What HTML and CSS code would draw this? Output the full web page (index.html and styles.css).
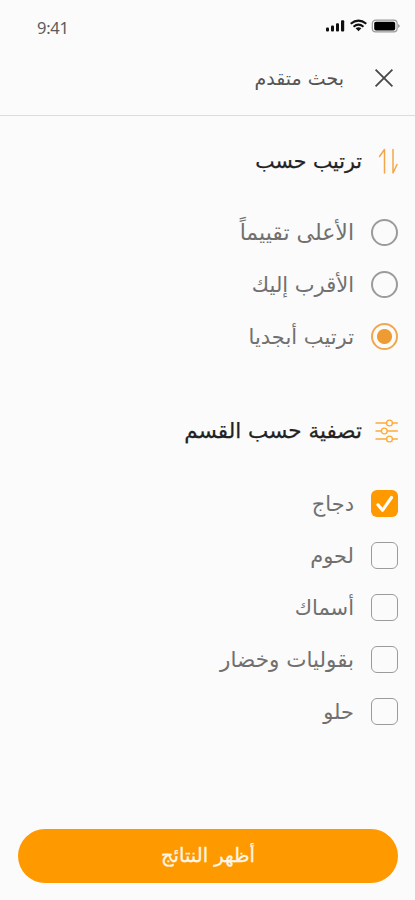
FILE: index.html
```html
<!DOCTYPE html>
<html lang="ar" dir="rtl">
<head>
<meta charset="utf-8">
<title>بحث متقدم</title>
<link rel="stylesheet" href="styles.css">
</head>
<body>
<main class="screen">
  <div class="status" dir="ltr">
    <span class="time">9:41</span>
    <svg class="indicators" width="76" height="16" viewBox="0 0 76 16">
      <g fill="#111"><rect x="1" y="9.5" width="3" height="4" rx="1"/><rect x="6" y="7.5" width="3" height="6" rx="1"/><rect x="11" y="5.3" width="3" height="8.2" rx="1"/><rect x="16" y="2.3" width="3.2" height="11.2" rx="1"/></g>
      <g fill="none" stroke="#111" stroke-width="2.1"><path d="M25.7 5.7Q33.5-.6 41.3 5.7"/><path d="M28.5 8.7Q33.5 4.7 38.5 8.7"/></g>
      <path d="M30.6 10.3Q33.5 8.4 36.4 10.3L33.5 13.2Z" fill="#111"/>
      <rect x="47.3" y="2.1" width="24.8" height="11.8" rx="3.4" fill="none" stroke="#999" stroke-width="1.2"/>
      <rect x="49.2" y="3.7" width="21" height="8.8" rx="1.8" fill="#000"/>
      <path d="M73.2 6Q76.2 8 73.2 10Z" fill="#888"/>
    </svg>
  </div>
  <header class="topbar">
    <svg width="20" height="20" viewBox="0 0 20 20" fill="none" stroke="#484848" stroke-width="1.8"><path d="M1.6 1.6 18.4 18.4M18.4 1.6 1.6 18.4"/></svg>
    <h1>بحث متقدم</h1>
  </header>
  <section class="group sort">
    <h2>
      <svg width="24" height="28" viewBox="0 0 24 28" fill="none" stroke="#f5a649" stroke-width="1.5" stroke-linejoin="round" stroke-linecap="round"><path d="M10.5 26V2.5L5.5 9.5M19 2.5V26L23 17.5"/></svg>
      <span>ترتيب حسب</span>
    </h2>
    <ul>
      <li><i class="radio"></i><span class="wide">الأعلى تقييماً</span></li>
      <li><i class="radio"></i><span>الأقرب إليك</span></li>
      <li><i class="radio on"></i><span>ترتيب أبجديا</span></li>
    </ul>
  </section>
  <section class="group filter">
    <h2>
      <svg width="24" height="28" viewBox="0 0 24 28" stroke="#ffaa37" stroke-width="1.4" fill="#fbfbfb" stroke-linecap="round"><path d="M2 6H23.3M2 14H23.3M2 22H23.3"/><circle cx="15.5" cy="6" r="2.9"/><circle cx="10.3" cy="14" r="2.9"/><circle cx="15.5" cy="22" r="2.9"/></svg>
      <span>تصفية حسب القسم</span>
    </h2>
    <ul>
      <li><i class="check on"><svg width="27" height="27" viewBox="0 0 27 27" fill="none" stroke="#fff" stroke-width="3.1" stroke-linecap="round" stroke-linejoin="round"><path d="M7 14.8 11.5 20.3 20.5 7.5"/></svg></i><span>دجاج</span></li>
      <li><i class="check"></i><span>لحوم</span></li>
      <li><i class="check"></i><span>أسماك</span></li>
      <li><i class="check"></i><span class="long">بقوليات وخضار</span></li>
      <li><i class="check"></i><span>حلو</span></li>
    </ul>
  </section>
  <button class="submit" type="button">أظهر النتائج</button>
</main>
</body>
</html>
```
FILE: styles.css
```css
* { box-sizing: border-box; margin: 0; padding: 0; }
body { background: #fbfbfb; font-family: "DejaVu Sans", sans-serif; }
svg { display: block; flex: none; }
.screen { width: 415px; height: 900px; display: flex; flex-direction: column; overflow: hidden; }
.status { height: 54px; display: flex; justify-content: space-between; padding: 18px 14px 0 37px; }
.time { font: 16.5px/20px "Noto Sans", sans-serif; letter-spacing: -0.3px; color: #5c5c5c; }
.topbar { height: 62px; display: flex; align-items: flex-start; gap: 30px; padding: 14px 21px 0; border-bottom: 1px solid #dcdcdc; }
.topbar h1 { font-size: 19px; line-height: 20px; font-weight: 400; color: #555; }
.group { padding: 0 17px; }
.sort { padding-top: 31px; }
.filter { padding-top: 55px; }
h2 { display: flex; align-items: center; gap: 12px; height: 28px; font-size: 20.5px; line-height: 28px; font-weight: 400; color: #222; -webkit-text-stroke: 0.25px #222; }
.filter h2 { font-size: 21.5px; }
ul { list-style: none; }
.sort ul { padding-top: 31px; }
.filter ul { padding-top: 32px; }
li { display: flex; align-items: center; gap: 17px; height: 52px; font-size: 21px; line-height: 32px; color: #707070; }
li span { padding-top: 1px; }
.wide { font-size: 22px; }
.long { font-size: 21.5px; }
.radio, .check { width: 27px; height: 27px; flex: none; border: 1.5px solid #9b9b9b; }
.radio { border-width: 2px; border-radius: 50%; }
.radio.on { border-color: #efa84f; background: radial-gradient(circle, #ed9b32 7px, transparent 8px); }
.check { border-radius: 6px; }
.check.on { border: 0; background: #ff9900; }
.submit { margin: auto 17px 17px 18px; height: 54px; flex: none; border: 0; border-radius: 27px; background: #ff9900; color: #fff6e6; font: 19.5px/54px "DejaVu Sans", sans-serif; -webkit-text-stroke: 0.3px #fff6e6; }
```
